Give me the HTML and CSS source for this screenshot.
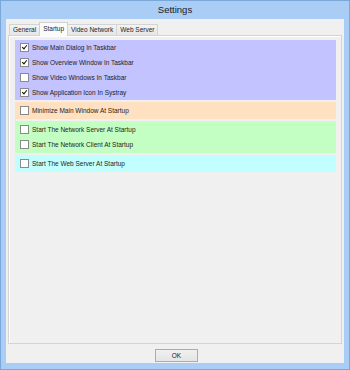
FILE: index.html
```html
<!DOCTYPE html>
<html>
<head>
<meta charset="utf-8">
<link rel="stylesheet" href="styles.css">
</head>
<body>
<div class="window">
  <div class="titlebar">Settings</div>
  <div class="client">
    <div class="tabs">
      <div class="tab">General</div>
      <div class="tab active">Startup</div>
      <div class="tab">Video Network</div>
      <div class="tab">Web Server</div>
    </div>
    <div class="page">
      <div class="group blue">
        <div class="row"><span class="cb checked"></span>Show Main Dialog In Taskbar</div>
        <div class="row"><span class="cb checked"></span>Show Overview Window In Taskbar</div>
        <div class="row"><span class="cb"></span>Show Video Windows In Taskbar</div>
        <div class="row"><span class="cb checked"></span>Show Application Icon In Systray</div>
      </div>
      <div class="group peach">
        <div class="row"><span class="cb"></span>Minimize Main Window At Startup</div>
      </div>
      <div class="group green">
        <div class="row"><span class="cb"></span>Start The Network Server At Startup</div>
        <div class="row"><span class="cb"></span>Start The Network Client At Startup</div>
      </div>
      <div class="group cyan">
        <div class="row"><span class="cb"></span>Start The Web Server At Startup</div>
      </div>
    </div>
    <div class="footer">
      <button class="btn">OK</button>
    </div>
  </div>
</div>
</body>
</html>
```
FILE: styles.css
```css
html, body {
  margin: 0;
  padding: 0;
}
body {
  width: 350px;
  height: 370px;
  overflow: hidden;
  font-family: "Liberation Sans", Arial, sans-serif;
  font-size: 6.5px;
  color: #1c1c1c;
}
.window {
  box-sizing: border-box;
  width: 350px;
  height: 370px;
  background: #a9cdf4;
  border: 1px solid #7ba7d8;
  padding: 0 5px 6px 5px;
  display: flex;
  flex-direction: column;
}
.titlebar {
  height: 18px;
  line-height: 18px;
  text-align: center;
  font-size: 9.5px;
  color: #1a1a1a;
}
.client {
  flex: 1;
  background: #f0f0f0;
  display: flex;
  flex-direction: column;
  padding: 3px 2px 0 2px;
}
.tabs {
  display: flex;
  align-items: flex-end;
  height: 13px;
  padding-left: 1px;
  position: relative;
  z-index: 1;
}
.tab {
  box-sizing: border-box;
  height: 11px;
  line-height: 10px;
  padding: 0 3px;
  border: 1px solid #d4d4d4;
  border-bottom: none;
  background: linear-gradient(#f3f3f3, #e6e6e6);
  margin-right: -1px;
  white-space: nowrap;
}
.tab.active {
  line-height: 12px;
  background: #fbfbfb;
  border-color: #d0d0d0;
  margin-bottom: -1px;
  height: 14px;
  padding: 0 3px;
}
.page {
  box-sizing: border-box;
  height: 309px;
  border: 1px solid #d4d4d4;
  box-shadow: inset 1px 1px 0 #fff;
  background: #f0f0f0;
  padding: 4px 5px 0 6px;
  display: flex;
  flex-direction: column;
  gap: 2px;
}
.blue { background: #c3c3ff; }
.peach { background: #ffe0c1; padding: 1px 0; }
.green { background: #c3ffc3; padding: 1px 0; }
.cyan { background: #c1ffff; padding: 1px 0; }
.row {
  height: 15px;
  display: flex;
  align-items: center;
  padding-left: 5px;
  white-space: nowrap;
}
.cb {
  box-sizing: border-box;
  width: 9px;
  height: 9px;
  border: 1px solid #8a8a8a;
  background: #fff;
  margin-right: 3px;
  flex: none;
  position: relative;
}
.cb.checked::after {
  content: "";
  position: absolute;
  left: 2px;
  top: 0px;
  width: 2px;
  height: 4px;
  border: solid #111;
  border-width: 0 1.5px 1.5px 0;
  transform: rotate(40deg);
}
.footer {
  flex: 1;
  display: flex;
  justify-content: center;
  align-items: flex-start;
  padding-top: 5px;
}
.btn {
  box-sizing: border-box;
  width: 43px;
  height: 13px;
  border: 1px solid #acacac;
  background: linear-gradient(#f0f0f0, #e5e5e5);
  font-family: "Liberation Sans", Arial, sans-serif;
  font-size: 6.5px;
  color: #1c1c1c;
  padding: 0;
  margin-left: 3px;
}
```
